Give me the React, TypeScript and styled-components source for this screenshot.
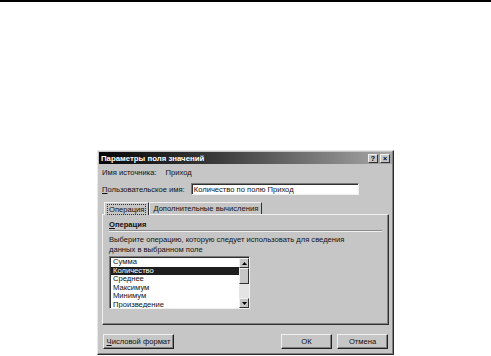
import styled, { createGlobalStyle } from "styled-components";

const GlobalStyle = createGlobalStyle`
  body {
    margin: 0;
    background: #ffffff;
    font-family: "Liberation Sans", Arial, sans-serif;
  }
`;

const TopRule = styled.div`
  height: 2px;
  background: #000;
`;

const Stage = styled.div`
  padding: 148px 0 0 97px;
`;

const Dialog = styled.div`
  width: 297px;
  height: 205px;
  box-sizing: border-box;
  background: #c6c6c6;
  border: 1px solid;
  border-color: #e8e8e8 #2a2a2a #2a2a2a #e8e8e8;
  box-shadow: inset -1px -1px 0 #808080;
  display: flex;
  flex-direction: column;
  font-size: 7.6px;
  color: #111;
`;

const TitleBar = styled.div`
  height: 12px;
  margin: 1px 1px 0 1px;
  background: linear-gradient(to right, #050505 0%, #3a3a3a 40%, #a8a8a8 100%);
  display: flex;
  align-items: center;
  justify-content: space-between;
  padding: 0 2px 0 2px;
  color: #fff;
  font-weight: bold;
  font-size: 7.8px;
`;

const TitleButtons = styled.div`
  display: flex;
  gap: 2px;
`;

const CaptionButton = styled.div`
  width: 10px;
  height: 9px;
  box-sizing: border-box;
  background: #c6c6c6;
  border: 1px solid;
  border-color: #f0f0f0 #303030 #303030 #f0f0f0;
  color: #000;
  font-size: 7px;
  font-weight: bold;
  display: flex;
  align-items: center;
  justify-content: center;
  line-height: 1;
`;

const Body = styled.div`
  flex: 1;
  display: flex;
  flex-direction: column;
  padding: 3px 3px 0 4px;
`;

const InfoRow = styled.div`
  height: 10px;
  display: flex;
  align-items: center;
  gap: 9px;
`;

const FieldRow = styled.div`
  margin-top: 5px;
  height: 14px;
  display: flex;
  align-items: center;
  gap: 6px;
`;

const Input = styled.div`
  width: 168px;
  height: 12px;
  box-sizing: border-box;
  background: #fff;
  border: 1px solid;
  border-color: #7a7a7a #f0f0f0 #f0f0f0 #7a7a7a;
  box-shadow: inset 1px 1px 0 #303030;
  padding: 0 2px;
  display: flex;
  align-items: center;
`;

const Tabs = styled.div`
  margin-top: 5px;
  height: 13px;
  display: flex;
  align-items: flex-end;
  padding-left: 2px;
`;

const Tab = styled.div<{ $active?: boolean }>`
  height: ${(p) => (p.$active ? 13 : 12)}px;
  box-sizing: border-box;
  padding: 0 3px;
  border: 1px solid;
  border-bottom: none;
  border-color: #f0f0f0 #303030 transparent #f0f0f0;
  display: flex;
  align-items: center;
  position: relative;
  z-index: ${(p) => (p.$active ? 1 : 0)};
  margin-bottom: ${(p) => (p.$active ? -1 : 0)}px;
  background: #c6c6c6;
`;

const FocusText = styled.span`
  outline: 1px dotted #333;
  padding: 0 1px;
`;

const Panel = styled.div`
  height: 111px;
  margin-right: 1px;
  box-sizing: border-box;
  border: 1px solid;
  border-color: #f0f0f0 #303030 #303030 #f0f0f0;
  box-shadow: inset -1px -1px 0 #808080;
  padding: 4px 4px 0 6px;
  display: flex;
  flex-direction: column;
`;

const SectionTitle = styled.div`
  font-weight: bold;
  height: 11px;
  display: flex;
  align-items: center;
  border-bottom: 1px solid #8a8a8a;
  box-shadow: 0 1px 0 #f0f0f0;
  margin-right: 2px;
`;

const Underline = styled.span`
  text-decoration: underline;
`;

const Description = styled.div`
  margin-top: 4px;
  line-height: 9.5px;
`;

const ListWrap = styled.div`
  margin-top: 2px;
  width: 141px;
  height: 53px;
  box-sizing: border-box;
  border: 1px solid;
  border-color: #7a7a7a #f0f0f0 #f0f0f0 #7a7a7a;
  box-shadow: inset 1px 1px 0 #303030;
  background: #fff;
  display: flex;
  padding: 1px 0 0 1px;
`;

const Items = styled.div`
  flex: 1;
  overflow: hidden;
`;

const Item = styled.div<{ $selected?: boolean }>`
  height: 8.5px;
  line-height: 8.5px;
  padding-left: 2px;
  background: ${(p) => (p.$selected ? "#1e1e1e" : "transparent")};
  color: ${(p) => (p.$selected ? "#fff" : "#111")};
`;

const ScrollBar = styled.div`
  width: 10px;
  display: flex;
  flex-direction: column;
  background: #e4e4e4;
`;

const ScrollButton = styled.div`
  height: 10px;
  box-sizing: border-box;
  background: #c6c6c6;
  border: 1px solid;
  border-color: #f0f0f0 #303030 #303030 #f0f0f0;
  display: flex;
  align-items: center;
  justify-content: center;
`;

const Thumb = styled(ScrollButton)`
  height: 16px;
`;

const Track = styled.div`
  flex: 1;
`;

const Footer = styled.div`
  margin-top: 9px;
  display: flex;
  align-items: center;
  padding-left: 1px;
  padding-right: 2px;
`;

const Button = styled.div<{ $w: number }>`
  width: ${(p) => p.$w}px;
  height: 15px;
  box-sizing: border-box;
  background: #c6c6c6;
  border: 1px solid;
  border-color: #f0f0f0 #202020 #202020 #f0f0f0;
  box-shadow: inset -1px -1px 0 #808080;
  display: flex;
  align-items: center;
  justify-content: center;
`;

const Spacer = styled.div`
  flex: 1;
`;

const ButtonGap = styled.div`
  width: 5px;
`;

function Arrow({ down }: { down?: boolean }) {
  return (
    <svg width="5" height="3" viewBox="0 0 5 3">
      <polygon points={down ? "0,0 5,0 2.5,3" : "2.5,0 5,3 0,3"} fill="#000" />
    </svg>
  );
}

const items = ["Сумма", "Количество", "Среднее", "Максимум", "Минимум", "Произведение"];

export default function App() {
  return (
    <>
      <GlobalStyle />
      <TopRule />
      <Stage>
        <Dialog>
          <TitleBar>
            <span>Параметры поля значений</span>
            <TitleButtons>
              <CaptionButton>?</CaptionButton>
              <CaptionButton>×</CaptionButton>
            </TitleButtons>
          </TitleBar>
          <Body>
            <InfoRow>
              <span>Имя источника:</span>
              <span>Приход</span>
            </InfoRow>
            <FieldRow>
              <span>
                <Underline>П</Underline>ользовательское имя:
              </span>
              <Input>Количество по полю Приход</Input>
            </FieldRow>
            <Tabs>
              <Tab $active>
                <FocusText>Операция</FocusText>
              </Tab>
              <Tab>Дополнительные вычисления</Tab>
            </Tabs>
            <Panel>
              <SectionTitle>
                <Underline>О</Underline>перация
              </SectionTitle>
              <Description>
                Выберите операцию, которую следует использовать для сведения
                <br />
                данных в выбранном поле
              </Description>
              <ListWrap>
                <Items>
                  {items.map((it, i) => (
                    <Item key={it} $selected={i === 1}>
                      {it}
                    </Item>
                  ))}
                </Items>
                <ScrollBar>
                  <ScrollButton>
                    <Arrow />
                  </ScrollButton>
                  <Thumb />
                  <Track />
                  <ScrollButton>
                    <Arrow down />
                  </ScrollButton>
                </ScrollBar>
              </ListWrap>
            </Panel>
            <Footer>
              <Button $w={71}>
                <span>
                  <Underline>Ч</Underline>исловой формат
                </span>
              </Button>
              <Spacer />
              <Button $w={51}>ОК</Button>
              <ButtonGap />
              <Button $w={51}>Отмена</Button>
            </Footer>
          </Body>
        </Dialog>
      </Stage>
    </>
  );
}
